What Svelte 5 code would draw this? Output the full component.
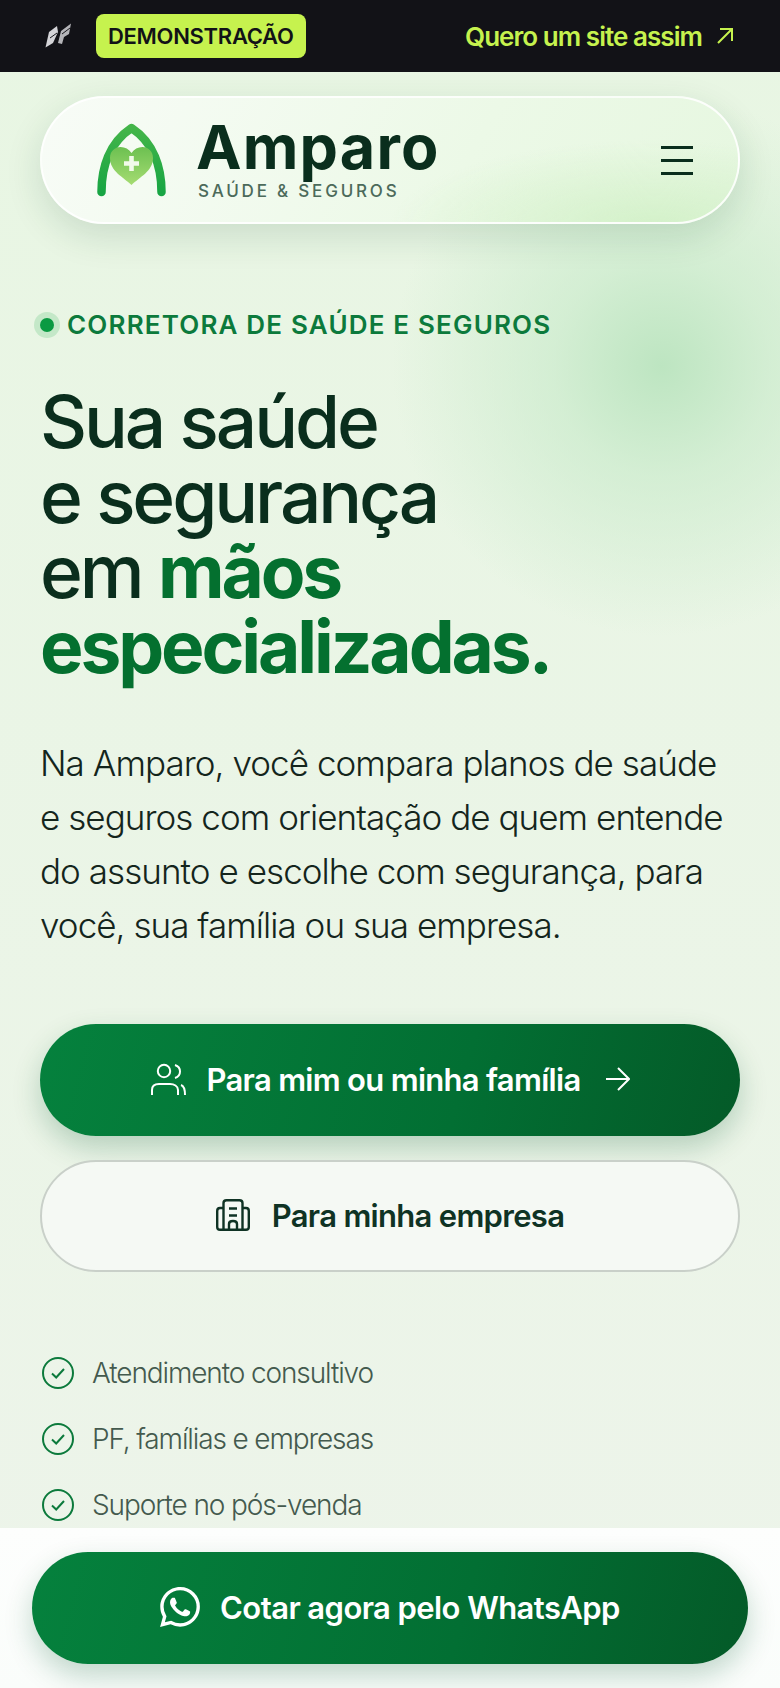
<script lang="ts">
  const checks = ['Atendimento consultivo', 'PF, famílias e empresas', 'Suporte no pós-venda'];
</script>

<div class="page">
  <div class="topbar">
    <div class="topbar-left">
      <svg class="butterfly" viewBox="0 0 26 26" width="26" height="26" aria-hidden="true">
        <path d="M0.5 24.5 L4 9 L12 3 L13 9 L8 20 Z" fill="#d4d4d8" />
        <path d="M13 20 L16 8 L26 0.5 L24 11 L19 14 L17 21 Z" fill="#b4b4b8" />
        <path d="M5 15 L12 10 M17 11 L25 5" stroke="#17171c" stroke-width="1" />
      </svg>
      <span class="demo">DEMONSTRAÇÃO</span>
    </div>
    <div class="cta-link">
      <span>Quero um site assim</span>
      <svg viewBox="0 0 16 16" width="16" height="16" fill="none" stroke="#c6f24e" stroke-width="2" aria-hidden="true">
        <path d="M1 15 L15 1 M3 1 H15 V13" />
      </svg>
    </div>
  </div>

  <main class="main">
    <div class="glow"></div>

    <header class="nav">
      <div class="brand">
        <svg class="logo" viewBox="0 0 70 74" width="70" height="74" aria-hidden="true">
          <defs>
            <linearGradient id="arch" x1="0" y1="0" x2="0" y2="1">
              <stop offset="0" stop-color="#43b549" />
              <stop offset="1" stop-color="#18a544" />
            </linearGradient>
            <linearGradient id="heart" x1="0" y1="0" x2="0" y2="1">
              <stop offset="0" stop-color="#6cc051" />
              <stop offset="1" stop-color="#a5dc72" />
            </linearGradient>
          </defs>
          <path d="M4.5 69 C4.5 45 12 20 34.5 5 C57 20 64.5 45 64.5 69" fill="none" stroke="url(#arch)" stroke-width="8.5" stroke-linecap="round" stroke-linejoin="round" />
          <path d="M34.5 62 C26 54 13 48 13 35 C13 28 18 24 23.5 24 C28 24 32 26 34.5 30 C37 26 41 24 45.5 24 C51 24 56 28 56 35 C56 48 43 54 34.5 62 Z" fill="url(#heart)" />
          <path d="M34.5 33 V48 M27 40.5 H42" stroke="#f1fae9" stroke-width="4.6" />
        </svg>
        <div class="brand-text">
          <span class="brand-name">Amparo</span>
          <span class="brand-sub">SAÚDE &amp; SEGUROS</span>
        </div>
      </div>
      <div class="burger" aria-label="Menu">
        <span></span><span></span><span></span>
      </div>
    </header>

    <div class="eyebrow">
      <span class="dot"></span>
      <span>CORRETORA DE SAÚDE E SEGUROS</span>
    </div>

    <h1>
      Sua saúde<br />e segurança<br />em <em>mãos<br />especializadas.</em>
    </h1>

    <p class="lead">
      Na Amparo, você compara planos de saúde e seguros com orientação de quem entende do assunto e escolhe com segurança, para você, sua família ou sua empresa.
    </p>

    <div class="actions">
      <button class="btn primary">
        <svg viewBox="0 0 35 32" width="35" height="32" fill="none" stroke="#fff" stroke-width="2" aria-hidden="true">
          <circle cx="13" cy="8" r="6.2" />
          <path d="M1 32 V27 C1 23 4 21 8 21 H19 C23 21 27 23 27 27 V32" />
          <path d="M24 2 C27 3 29 5.5 29 8.5 C29 11.5 27 14 24 15" />
          <path d="M30 22 C33 23 34 26 34 32" />
        </svg>
        <span>Para mim ou minha família</span>
        <svg class="arrow" viewBox="0 0 24 24" width="24" height="24" fill="none" stroke="#fff" stroke-width="2" aria-hidden="true">
          <path d="M0 12 H23 M12 1 L23 12 L12 23" />
        </svg>
      </button>
      <button class="btn secondary">
        <svg viewBox="0 0 34 32" width="34" height="32" fill="none" stroke="#0f3324" stroke-width="2.4" stroke-linejoin="round" aria-hidden="true">
          <path d="M7.5 9 H4 Q1.2 9 1.2 12 V28 Q1.2 30.8 4 30.8 H30 Q32.8 30.8 32.8 28 V12 Q32.8 9 30 9 H26.5" />
          <path d="M7.5 30.8 V4 Q7.5 1.2 10.5 1.2 H23.5 Q26.5 1.2 26.5 4 V30.8" />
          <path d="M13 9.5 H21 M13 16.5 H21 M13 30.8 V25 C13 21 21 21 21 25 V30.8" />
        </svg>
        <span>Para minha empresa</span>
      </button>
    </div>

    <ul class="checks">
      {#each checks as item}
        <li>
          <svg viewBox="0 0 32 32" width="32" height="32" fill="none" stroke="#0c7a3c" stroke-width="2" aria-hidden="true">
            <circle cx="16" cy="16" r="15" />
            <path d="M10 16.5 L14.2 20.5 L22 12" />
          </svg>
          <span>{item}</span>
        </li>
      {/each}
    </ul>
  </main>

  <div class="sticky">
    <button class="btn primary whats">
      <svg viewBox="0 0 24 24" width="40" height="40" fill="#fff" aria-hidden="true">
        <path d="M17.472 14.382c-.297-.149-1.758-.867-2.03-.967-.273-.099-.471-.148-.67.15-.197.297-.767.966-.94 1.164-.173.199-.347.223-.644.075-.297-.15-1.255-.463-2.39-1.475-.883-.788-1.48-1.761-1.653-2.059-.173-.297-.018-.458.13-.606.134-.133.298-.347.446-.52.149-.174.198-.298.298-.497.099-.198.05-.371-.025-.52-.075-.149-.669-1.612-.916-2.207-.242-.579-.487-.5-.669-.51-.173-.008-.371-.01-.57-.01-.198 0-.52.074-.792.372-.272.297-1.04 1.016-1.04 2.479 0 1.462 1.065 2.875 1.213 3.074.149.198 2.096 3.2 5.077 4.487.709.306 1.262.489 1.694.625.712.227 1.36.195 1.871.118.571-.085 1.758-.719 2.006-1.413.248-.694.248-1.289.173-1.413-.074-.124-.272-.198-.57-.347m-5.421 7.403h-.004a9.87 9.87 0 01-5.031-1.378l-.361-.214-3.741.982.998-3.648-.235-.374a9.86 9.86 0 01-1.51-5.26c.001-5.45 4.436-9.884 9.888-9.884 2.64 0 5.122 1.03 6.988 2.898a9.825 9.825 0 012.893 6.994c-.003 5.45-4.437 9.884-9.885 9.884m8.413-18.297A11.815 11.815 0 0012.05 0C5.495 0 .16 5.335.157 11.892c0 2.096.547 4.142 1.588 5.945L.057 24l6.305-1.654a11.882 11.882 0 005.683 1.448h.005c6.554 0 11.89-5.335 11.893-11.893a11.821 11.821 0 00-3.48-8.413z" />
      </svg>
      <span>Cotar agora pelo WhatsApp</span>
    </button>
  </div>
</div>

<style>
  :global(body) {
    margin: 0;
    background: #e9f4e6;
    font-family: Inter, "Liberation Sans", sans-serif;
  }

  .page {
    position: relative;
    width: 780px;
    height: 1688px;
    overflow: hidden;
    background: linear-gradient(180deg, #e8f6e3 0%, #edf4ea 100%);
  }

  .topbar {
    height: 72px;
    box-sizing: border-box;
    padding: 14px 47px 14px 45px;
    background: #121217;
    display: flex;
    align-items: center;
    justify-content: space-between;
  }

  .topbar-left {
    display: flex;
    align-items: center;
    gap: 25px;
  }

  .butterfly {
    display: block;
  }

  .demo {
    background: #c6f24e;
    color: #121217;
    font-size: 22px;
    font-weight: 600;
    line-height: 44px;
    padding: 0 12px;
    border-radius: 8px;
    letter-spacing: -0.3px;
  }

  .cta-link {
    display: flex;
    align-items: center;
    gap: 15px;
    color: #c6f24e;
    font-size: 26px;
    font-weight: 600;
    letter-spacing: -0.95px;
  }

  .main {
    position: relative;
    padding: 24px 40px 0;
  }

  .glow {
    position: absolute;
    left: 392px;
    top: 24px;
    width: 540px;
    height: 540px;
    background: radial-gradient(closest-side, #bde5c1 0%, rgba(200, 234, 202, 0.65) 40%, rgba(230, 245, 228, 0) 100%);
  }

  .nav {
    position: relative;
    height: 128px;
    box-sizing: border-box;
    padding: 0 45px 0 55px;
    border: 2px solid rgba(255, 255, 255, 0.85);
    border-radius: 64px;
    background:
      radial-gradient(ellipse 38% 70% at 88% 104%, #d3f1c9 0%, rgba(211, 241, 201, 0) 100%),
      linear-gradient(120deg, #f8fcf7 0%, #ecf9e7 60%, #e6f7e0 100%);
    box-shadow: 0 12px 36px rgba(15, 70, 40, 0.14);
    display: flex;
    align-items: center;
    justify-content: space-between;
  }

  .brand {
    display: flex;
    align-items: center;
    gap: 29px;
  }

  .logo {
    display: block;
    flex: none;
  }

  .brand-text {
    display: flex;
    flex-direction: column;
    margin-bottom: 4px;
  }

  .brand-name {
    font-size: 61px;
    font-weight: 650;
    line-height: 62px;
    color: #0a2e1d;
    letter-spacing: 1.2px;
  }

  .brand-sub {
    font-size: 17px;
    font-weight: 500;
    line-height: 20px;
    letter-spacing: 2.8px;
    color: #4c6a5a;
    margin: 3px 0 0 2px;
  }

  .burger {
    display: flex;
    flex-direction: column;
    gap: 10px;
  }

  .burger span {
    display: block;
    width: 32px;
    height: 3px;
    background: #0a2e1d;
  }

  .eyebrow {
    position: relative;
    margin-top: 84px;
    display: flex;
    align-items: center;
    gap: 13px;
    font-size: 26px;
    font-weight: 600;
    line-height: 34px;
    letter-spacing: 1.18px;
    color: #0c7a3c;
  }

  .dot {
    width: 14px;
    height: 14px;
    border-radius: 50%;
    background: #0a9a42;
    box-shadow: 0 0 0 6px #c4e8c8;
  }

  h1 {
    position: relative;
    margin: 42px 0 0;
    font-size: 73px;
    font-weight: 500;
    line-height: 75px;
    letter-spacing: -3.1px;
    color: #0a2e1d;
  }

  h1 em {
    font-style: normal;
    font-weight: 700;
    color: #04702f;
  }

  .lead {
    position: relative;
    margin: 52px 0 0;
    font-size: 35px;
    font-weight: 300;
    line-height: 54px;
    letter-spacing: -0.95px;
    color: #14251c;
    width: 700px;
  }

  .actions {
    margin-top: 72px;
    display: flex;
    flex-direction: column;
    gap: 24px;
  }

  .btn {
    width: 100%;
    height: 112px;
    box-sizing: border-box;
    border-radius: 56px;
    border: none;
    padding: 0 0 2px;
    font-family: inherit;
    font-size: 31px;
    font-weight: 600;
    letter-spacing: -0.7px;
    display: flex;
    align-items: center;
    justify-content: center;
  }

  .btn svg {
    flex: none;
  }

  .primary {
    color: #fff;
    gap: 21px;
    background: linear-gradient(105deg, #05813d 0%, #026f33 60%, #045a28 100%);
    box-shadow: 0 12px 28px rgba(10, 90, 50, 0.24);
  }

  .arrow {
    margin-left: 4px;
  }

  .secondary {
    color: #0f3324;
    gap: 22px;
    background: #f5f9f4;
    border: 2px solid #c9d0c9;
  }

  .checks {
    list-style: none;
    margin: 80px 0 0 2px;
    padding: 0;
    display: flex;
    flex-direction: column;
    gap: 24px;
  }

  .checks li {
    display: flex;
    align-items: center;
    gap: 18px;
    height: 42px;
    font-size: 28px;
    font-weight: 300;
    letter-spacing: -1.12px;
    color: #445a4e;
  }

  .sticky {
    position: fixed;
    left: 0;
    top: 1528px;
    width: 780px;
    height: 160px;
    box-sizing: border-box;
    padding: 24px 32px;
    background: linear-gradient(180deg, #fdfefd 0%, #fafdfb 100%);
  }

  .whats {
    letter-spacing: -0.58px;
    gap: 20px;
  }
</style>
